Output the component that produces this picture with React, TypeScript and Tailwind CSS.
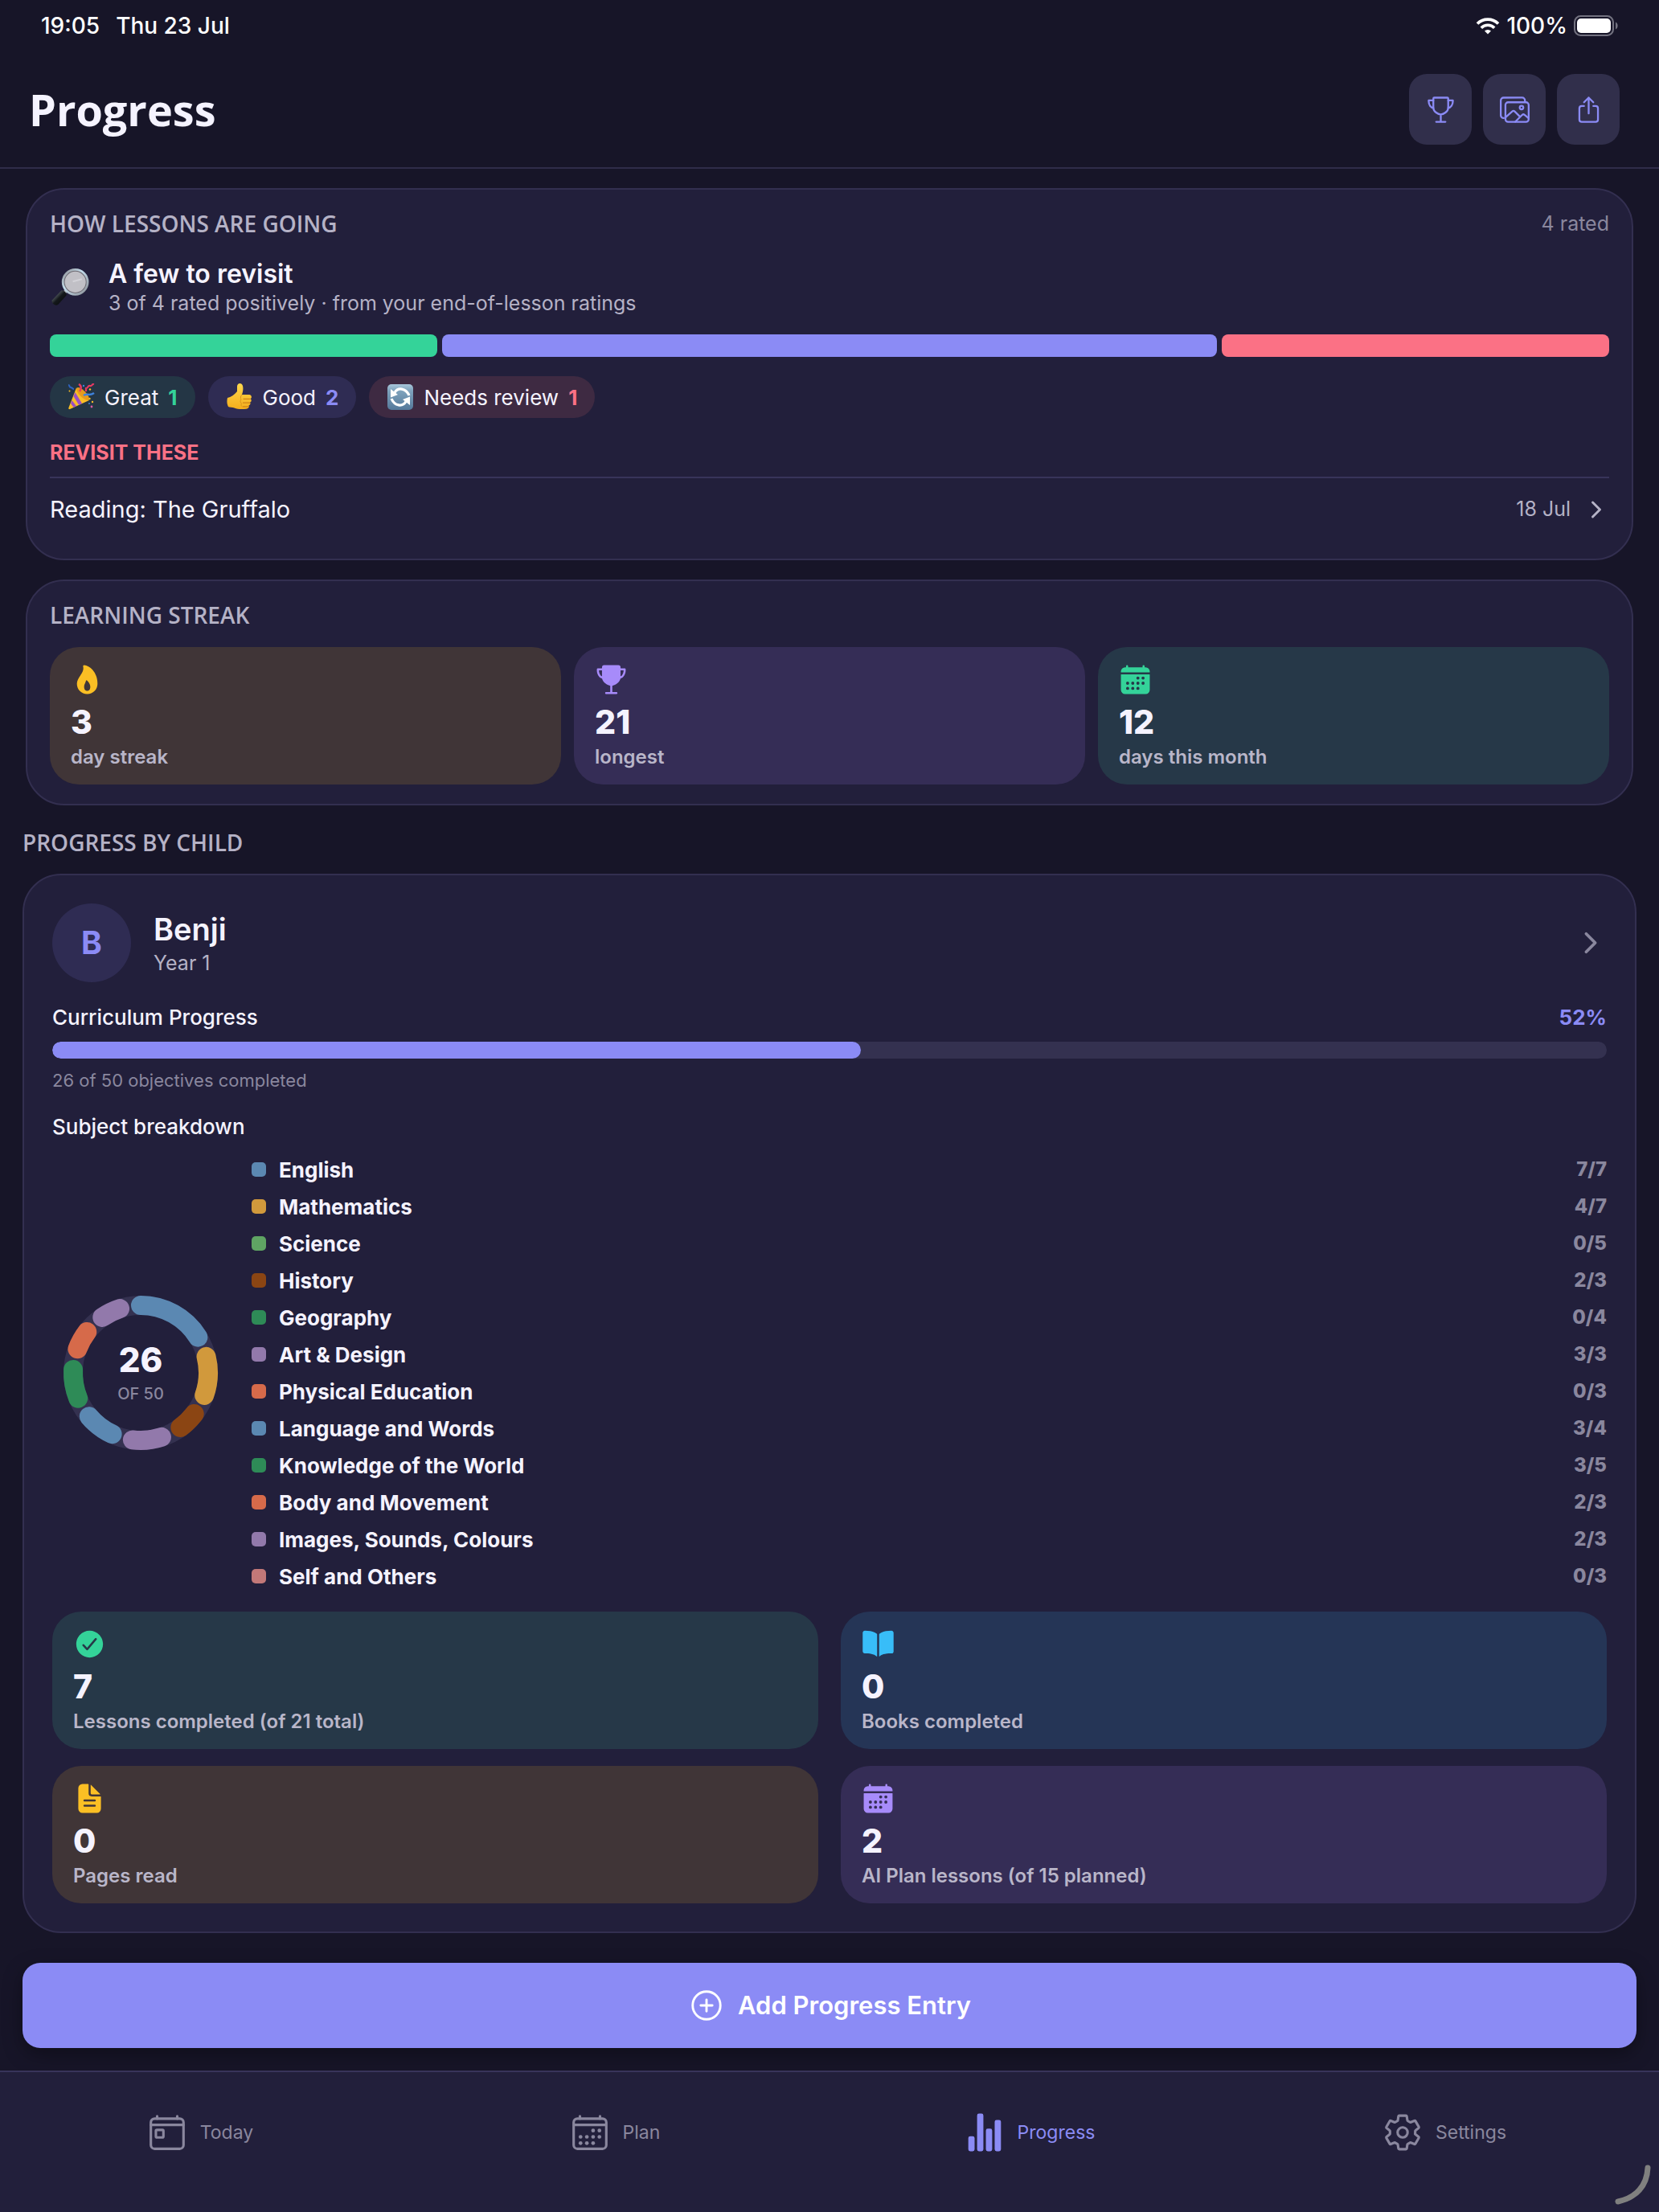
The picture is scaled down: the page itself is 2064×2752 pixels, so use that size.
import type { ReactNode } from "react";
import type { IconType } from "react-icons";
import { useState } from "react";
import clsx from "clsx";
import {
  IoAddCircleOutline,
  IoBook,
  IoCalendar,
  IoCalendarOutline,
  IoCheckmarkCircle,
  IoChevronForward,
  IoDocumentText,
  IoFlame,
  IoImagesOutline,
  IoSettingsOutline,
  IoShareOutline,
  IoStatsChart,
  IoTodayOutline,
  IoTrophy,
  IoTrophyOutline,
} from "react-icons/io5";

interface Subject {
  name: string;
  done: number;
  total: number;
  color: string;
}

const subjects: Subject[] = [
  { name: "English", done: 7, total: 7, color: "#5b88b2" },
  { name: "Mathematics", done: 4, total: 7, color: "#d1993c" },
  { name: "Science", done: 0, total: 5, color: "#5fa463" },
  { name: "History", done: 2, total: 3, color: "#8b4513" },
  { name: "Geography", done: 0, total: 4, color: "#2e8b57" },
  { name: "Art & Design", done: 3, total: 3, color: "#9279ab" },
  { name: "Physical Education", done: 0, total: 3, color: "#d66a4a" },
  { name: "Language and Words", done: 3, total: 4, color: "#5b88b2" },
  { name: "Knowledge of the World", done: 3, total: 5, color: "#2e8b57" },
  { name: "Body and Movement", done: 2, total: 3, color: "#d66a4a" },
  { name: "Images, Sounds, Colours", done: 2, total: 3, color: "#9279ab" },
  { name: "Self and Others", done: 0, total: 3, color: "#c27878" },
];

const tones = {
  amber: { tile: "bg-[#403537]", icon: "text-[#fbbf24]" },
  violet: { tile: "bg-[#352d56]", icon: "text-[#a78bfa]" },
  green: { tile: "bg-[#263848]", icon: "text-[#34d399]" },
  blue: { tile: "bg-[#253556]", icon: "text-[#38bdf8]" },
};

const tabs = [
  { name: "Today", icon: IoTodayOutline },
  { name: "Plan", icon: IoCalendarOutline },
  { name: "Progress", icon: IoStatsChart },
  { name: "Settings", icon: IoSettingsOutline },
];

export default function App() {
  const [tab, setTab] = useState("Progress");

  return (
    <div className="relative flex min-h-screen flex-col bg-[#171528] font-['Inter',sans-serif] text-[#f5f3ff]">
      <StatusBar />

      <header className="flex items-center justify-between border-b-2 border-[#2f2c49] py-7 pr-[49px] pl-9">
        <h1 className="font-['Open_Sans',sans-serif] text-[54px] leading-[72px] font-bold">
          Progress
        </h1>
        <div className="flex gap-[14px]">
          <HeaderButton label="Achievements" icon={IoTrophyOutline} />
          <HeaderButton label="Gallery" icon={IoImagesOutline} />
          <HeaderButton label="Share" icon={IoShareOutline} />
        </div>
      </header>

      <main className="grow px-7 pt-6 pb-7">
        <LessonRatings />
        <LearningStreak />

        <div className="mt-7">
          <SectionTitle>PROGRESS BY CHILD</SectionTitle>
        </div>
        <ChildCard />

        <button className="mt-[37px] flex h-[106px] w-full items-center justify-center gap-4 rounded-[22px] bg-[#8b8bf5] text-[31px] font-semibold text-white shadow-[0_8px_24px_rgba(0,0,0,0.35)]">
          <IoAddCircleOutline className="size-[46px]" />
          Add Progress Entry
        </button>
      </main>

      <nav className="grid grid-cols-4 border-t-2 border-[#38345a] bg-[#221f3b] pt-[50px] pb-[74px]">
        {tabs.map(({ name, icon: Icon }) => (
          <button
            key={name}
            onClick={() => setTab(name)}
            aria-current={tab === name ? "page" : undefined}
            className={clsx(
              "flex items-center justify-center gap-4 pr-[18px] text-[23px]",
              tab === name ? "text-[#8b8bf5]" : "text-[#8a879e]",
            )}
          >
            <Icon className="size-[50px]" />
            {name}
          </button>
        ))}
      </nav>

      {/* screen corner handle */}
      <svg
        viewBox="0 0 50 52"
        className="absolute right-2 bottom-2 h-[52px] w-[50px]"
        aria-hidden="true"
      >
        <path
          d="M44 5C43 27 30 42 7 47"
          fill="none"
          stroke="#80807f"
          strokeWidth="7"
          strokeLinecap="round"
        />
      </svg>
    </div>
  );
}

function StatusBar() {
  return (
    <div className="flex h-16 items-center justify-between pr-[50px] pl-[51px] text-[28px] font-medium text-white">
      <div className="flex gap-5">
        <span>19:05</span>
        <span>Thu 23 Jul</span>
      </div>
      <div className="flex items-center gap-2">
        <svg viewBox="0 0 30 21" className="h-[21px] w-[30px]" fill="none">
          <path
            d="M2 7.5a18.5 18.5 0 0 1 26 0"
            stroke="currentColor"
            strokeWidth="3.8"
          />
          <path
            d="M6.8 12.7a11.6 11.6 0 0 1 16.4 0"
            stroke="currentColor"
            strokeWidth="3.6"
          />
          <path d="M15 20.6l-4-4a5.7 5.7 0 0 1 8 0z" fill="currentColor" />
        </svg>
        <span>100%</span>
        <svg viewBox="0 0 56 26" className="h-[26px] w-[56px]">
          <rect
            x="1"
            y="1"
            width="48"
            height="24"
            rx="7.5"
            fill="none"
            stroke="#737280"
            strokeWidth="2"
          />
          <rect x="4" y="4" width="42" height="18" rx="5" fill="white" />
          <path d="M52 8.500c3.500 1.500 3.500 7.500 0 9z" fill="#737280" />
        </svg>
      </div>
    </div>
  );
}

function HeaderButton({ label, icon: Icon }: { label: string; icon: IconType }) {
  return (
    <button
      aria-label={label}
      className="flex h-[88px] w-[78px] items-center justify-center rounded-[22px] bg-[#312f4b] text-[#8b8bf5]"
    >
      <Icon className="size-[37px]" />
    </button>
  );
}

function SectionTitle({ children }: { children: ReactNode }) {
  return (
    <h2 className="font-['Open_Sans',sans-serif] text-[28px] leading-9 font-semibold text-[#b5b2c6]">
      {children}
    </h2>
  );
}

function LessonRatings() {
  return (
    <section className="mx-1 rounded-[48px] border-2 border-[#332f50] bg-[#221f3b] px-7 pt-6 pb-[22px]">
      <div className="flex items-center justify-between">
        <SectionTitle>HOW LESSONS ARE GOING</SectionTitle>
        <span className="text-[25px] leading-9 text-[#8a879e]">4 rated</span>
      </div>

      <div className="mt-[25px] flex items-center gap-6">
        <MagnifierEmoji />
        <div>
          <p className="text-[32px] leading-10 font-semibold">
            A few to revisit
          </p>
          <p className="text-[25px] leading-8 text-[#b5b2c6]">
            3 of 4 rated positively · from your end-of-lesson ratings
          </p>
        </div>
      </div>

      <div className="mt-[23px] grid h-7 grid-cols-[1fr_2fr_1fr] gap-[6px]">
        <div className="rounded-lg bg-[#34d399]" />
        <div className="rounded-lg bg-[#8b8bf5]" />
        <div className="rounded-lg bg-[#fb7185]" />
      </div>

      <div className="mt-6 flex gap-4">
        <span className="flex h-[52px] items-center gap-3 rounded-full bg-[#243645] px-[22px] text-[26px]">
          <PartyEmoji />
          Great <b className="font-bold text-[#34d399]">1</b>
        </span>
        <span className="flex h-[52px] items-center gap-3 rounded-full bg-[#2f2c53] px-[22px] text-[26px]">
          <ThumbEmoji />
          Good <b className="font-bold text-[#8b8bf5]">2</b>
        </span>
        <span className="flex h-[52px] items-center gap-3 rounded-full bg-[#3e2a42] px-[22px] text-[26px]">
          <RepeatEmoji />
          Needs review <b className="font-bold text-[#fb7185]">1</b>
        </span>
      </div>

      <h3 className="mt-7 text-[25px] leading-[30px] font-bold text-[#fb7185]">
        REVISIT THESE
      </h3>
      <a
        href="#reading-the-gruffalo"
        className="mt-[15px] flex h-20 items-center border-t-2 border-[#38345a] text-[29px]"
      >
        <span className="grow">Reading: The Gruffalo</span>
        <span className="text-[25px] text-[#b5b2c6]">18 Jul</span>
        <IoChevronForward className="ml-4 size-8 text-[#b5b2c6]" />
      </a>
    </section>
  );
}

function LearningStreak() {
  return (
    <section className="mx-1 mt-6 rounded-[48px] border-2 border-[#332f50] bg-[#221f3b] px-7 py-6">
      <SectionTitle>LEARNING STREAK</SectionTitle>
      <div className="mt-[22px] grid grid-cols-3 gap-4">
        <StatTile tone="amber" icon={IoFlame} value={3} label="day streak" />
        <StatTile tone="violet" icon={IoTrophy} value={21} label="longest" />
        <StatTile
          tone="green"
          icon={IoCalendar}
          value={12}
          label="days this month"
        />
      </div>
    </section>
  );
}

function ChildCard() {
  return (
    <section className="mt-[21px] rounded-[48px] border-2 border-[#332f50] bg-[#221f3b] p-[35px]">
      <a href="#benji" className="flex items-center">
        <span className="flex size-[98px] items-center justify-center rounded-full bg-[#2f2c53] text-[39px] font-bold text-[#8b8bf5]">
          B
        </span>
        <span className="ml-7 flex grow flex-col gap-[2px]">
          <span className="text-[38px] leading-[48px] font-semibold">
            Benji
          </span>
          <span className="text-[25px] leading-8 text-[#b5b2c6]">Year 1</span>
        </span>
        <IoChevronForward className="size-10 text-[#8a879e]" />
      </a>

      <div className="mt-7 flex justify-between text-[26px] leading-8">
        <span className="font-medium">Curriculum Progress</span>
        <span className="font-bold text-[#8b8bf5]">52%</span>
      </div>
      <div
        role="progressbar"
        aria-label="Curriculum Progress"
        aria-valuenow={52}
        className="mt-[14px] h-[21px] overflow-hidden rounded-full bg-[#343150]"
      >
        <div className="h-full w-[52%] rounded-full bg-[#8b8bf5]" />
      </div>
      <p className="mt-[13px] text-[22px] leading-7 text-[#8a879e]">
        26 of 50 objectives completed
      </p>

      <h3 className="mt-7 text-[26px] leading-8 font-medium">
        Subject breakdown
      </h3>
      <div className="mt-[14px] flex items-center gap-7">
        <SubjectDonut />
        <ul className="grow">
          {subjects.map(({ name, done, total, color }) => (
            <li key={name} className="flex h-[46px] items-center text-[26px]">
              <span
                className="size-[18px] rounded-[5px]"
                style={{ backgroundColor: color }}
              />
              <span className="ml-4 grow font-bold">{name}</span>
              <span className="text-2xl font-extrabold text-[#8a879e]">
                {done}/{total}
              </span>
            </li>
          ))}
        </ul>
      </div>

      <div className="mt-[21px] grid grid-cols-2 gap-x-7 gap-y-[21px]">
        <StatTile
          tone="green"
          icon={IoCheckmarkCircle}
          value={7}
          label="Lessons completed (of 21 total)"
        />
        <StatTile
          tone="blue"
          icon={IoBook}
          value={0}
          label="Books completed"
        />
        <StatTile
          tone="amber"
          icon={IoDocumentText}
          value={0}
          label="Pages read"
        />
        <StatTile
          tone="violet"
          icon={IoCalendar}
          value={2}
          label="AI Plan lessons (of 15 planned)"
        />
      </div>
    </section>
  );
}

interface StatTileProps {
  tone: keyof typeof tones;
  icon: IconType;
  value: number;
  label: string;
}

function StatTile({ tone, icon: Icon, value, label }: StatTileProps) {
  return (
    <div
      className={clsx(
        "rounded-[36px] px-[26px] pt-5 pb-[18px]",
        tones[tone].tile,
      )}
    >
      <Icon className={clsx("size-[41px]", tones[tone].icon)} />
      <p className="mt-2 text-[41px] leading-[48px] font-extrabold">{value}</p>
      <p className="mt-1 text-2xl leading-8 font-semibold text-[#b9b6c9]">
        {label}
      </p>
    </div>
  );
}

// degrees left between two arcs, so that their round caps don't touch
const ARC_GAP = 18;

function SubjectDonut() {
  const arcs = subjects.filter((s) => s.done > 0);
  const completed = arcs.reduce((sum, s) => sum + s.done, 0);
  const perObjective = (360 - ARC_GAP * arcs.length) / completed;

  let angle = 0;
  const segments = arcs.map((s) => {
    const start = angle;
    const end = start + s.done * perObjective;
    angle = end + ARC_GAP;
    return { ...s, d: arcPath(start, end) };
  });

  return (
    <div className="relative flex size-[220px] shrink-0 flex-col items-center justify-center">
      <svg viewBox="0 0 220 220" className="absolute inset-0" fill="none">
        <circle cx="110" cy="110" r="84" stroke="#343150" strokeWidth="24" />
        {segments.map((s) => (
          <path
            key={s.name}
            d={s.d}
            stroke={s.color}
            strokeWidth="24"
            strokeLinecap="round"
          />
        ))}
      </svg>
      <span className="relative text-[42px] leading-[48px] font-extrabold">
        {completed}
      </span>
      <span className="relative mt-1 text-[20px] leading-7 font-medium text-[#8a879e]">
        OF 50
      </span>
    </div>
  );
}

function arcPath(start: number, end: number) {
  const point = (deg: number) => {
    const rad = ((deg - 90) * Math.PI) / 180;
    return `${110 + 84 * Math.cos(rad)} ${110 + 84 * Math.sin(rad)}`;
  };
  return `M${point(start)}A84 84 0 0 1 ${point(end)}`;
}

function MagnifierEmoji() {
  return (
    <svg viewBox="0 0 48 48" className="size-[49px]">
      <defs>
        <linearGradient id="rim" x1="0" y1="0" x2="1" y2="1">
          <stop offset="0" stopColor="#8d8d90" />
          <stop offset="0.4" stopColor="#c3dcec" />
          <stop offset="1" stopColor="#8b8f95" />
        </linearGradient>
        <linearGradient id="handle" x1="0" y1="0" x2="1" y2="1">
          <stop offset="0.2" stopColor="#6a7378" />
          <stop offset="0.5" stopColor="#14181b" />
          <stop offset="1" stopColor="#050607" />
        </linearGradient>
      </defs>
      <path d="M15 33l7-7" stroke="#a9a9ac" strokeWidth="4" />
      <path
        d="M3 39.500l11-11.500c2-1.500 7.500 3 6 6L10 45c-3.500 2.500-9-2-7-5.500z"
        fill="url(#handle)"
      />
      <circle
        cx="31"
        cy="17.500"
        r="15"
        fill="#c1c0c6"
        stroke="url(#rim)"
        strokeWidth="3"
      />
      <circle
        cx="31"
        cy="17.500"
        r="13.300"
        fill="none"
        stroke="#6e6b73"
        strokeWidth="1"
      />
      <path d="M28 17l11-3" stroke="#d3d2d8" strokeWidth="2" />
    </svg>
  );
}

function PartyEmoji() {
  return (
    <svg viewBox="0 0 34 34" className="size-[34px]">
      <path d="M11 5.500L27 21 3 32c-1.500.5-2-.5-1.500-2z" fill="#f9bd25" />
      <path d="M9.500 11l8.500 14-4 1.800L7.500 16z" fill="#9a4fc4" />
      <path d="M5.500 21l5.500 7.200-3.500 1.600-3.500-4.800z" fill="#9a4fc4" />
      <ellipse
        cx="19"
        cy="13"
        rx="4"
        ry="10.500"
        transform="rotate(-45 19 13)"
        fill="#e89a1d"
      />
      <path
        d="M14 1c4 2 3 6 1 9"
        stroke="#e63a63"
        strokeWidth="2.500"
        fill="none"
      />
      <path
        d="M20 15c4-3 8 1 13-3"
        stroke="#3f83dd"
        strokeWidth="2.500"
        fill="none"
      />
      <path
        d="M1 2c2 0 1 3 3 3s2 2 4 2"
        stroke="#2f62bd"
        strokeWidth="2.200"
        fill="none"
      />
      <path
        d="M33 1c-3-1-2 3-5 2s-2 3-5 3v4"
        stroke="#e63a63"
        strokeWidth="2.200"
        fill="none"
      />
      <circle cx="28" cy="7.500" r="1.200" fill="#f9bd25" />
      <circle cx="20" cy="3" r="1.200" fill="#3f83dd" />
      <circle cx="2.500" cy="9.500" r="1" fill="#f9bd25" />
      <circle cx="27.500" cy="19" r="1.200" fill="#f9bd25" />
      <circle cx="31" cy="23" r="1.200" fill="#f9bd25" />
      <circle cx="27" cy="25" r="1" fill="#3f83dd" />
      <circle cx="30" cy="29" r="1.400" fill="#d85aa5" />
    </svg>
  );
}

function ThumbEmoji() {
  return (
    <svg viewBox="0 0 34 34" className="size-[34px]">
      <defs>
        <linearGradient id="skin" x1="0" y1="0" x2="0" y2="1">
          <stop offset="0" stopColor="#ffd84d" />
          <stop offset="1" stopColor="#f4ae1c" />
        </linearGradient>
      </defs>
      <path
        d="M2 18c4-1 9-4 12-8V4c0-5 6-5 7-1 1 4 0 8-1 11h9c3 0 4 4 1.500 5 1.800 1.200 1.500 4-.5 4.500 1 1.500.5 3.500-1.500 4 .5 2-.5 4-3 4.200-7 .6-11 .3-15-1.200-2-.8-6-.5-7.500-1.500-2-4-1.800-7.500-1-11z"
        fill="url(#skin)"
      />
      <path
        d="M30 19.300h-8M29.500 24.200h-8M28.500 28.800h-7"
        stroke="#cf8216"
        strokeWidth="1.200"
        strokeLinecap="round"
      />
      <path
        d="M20 14c-2 2-2 4-1 6-1.500 1.500-1 4 .5 5-1 1.500-.5 3.500 1 4"
        stroke="#dd951b"
        strokeWidth="1"
        fill="none"
      />
    </svg>
  );
}

function RepeatEmoji() {
  return (
    <svg viewBox="0 0 34 34" className="size-[34px]">
      <defs>
        <linearGradient id="tile" x1="0" y1="0" x2="0" y2="1">
          <stop offset="0" stopColor="#a9c6da" />
          <stop offset="0.25" stopColor="#7fa3bd" />
          <stop offset="1" stopColor="#54789a" />
        </linearGradient>
      </defs>
      <rect x="1" y="1" width="32" height="32" rx="5" fill="url(#tile)" />
      <path
        d="M10 11.500C14 4.500 24 5.500 28 15M24 22.500C20 29.500 10 28.500 6 19"
        stroke="white"
        strokeWidth="3.200"
        fill="none"
      />
      <path d="M5 7v10.500l9-3.500zM29 27V16.500l-9 3.500z" fill="white" />
    </svg>
  );
}
